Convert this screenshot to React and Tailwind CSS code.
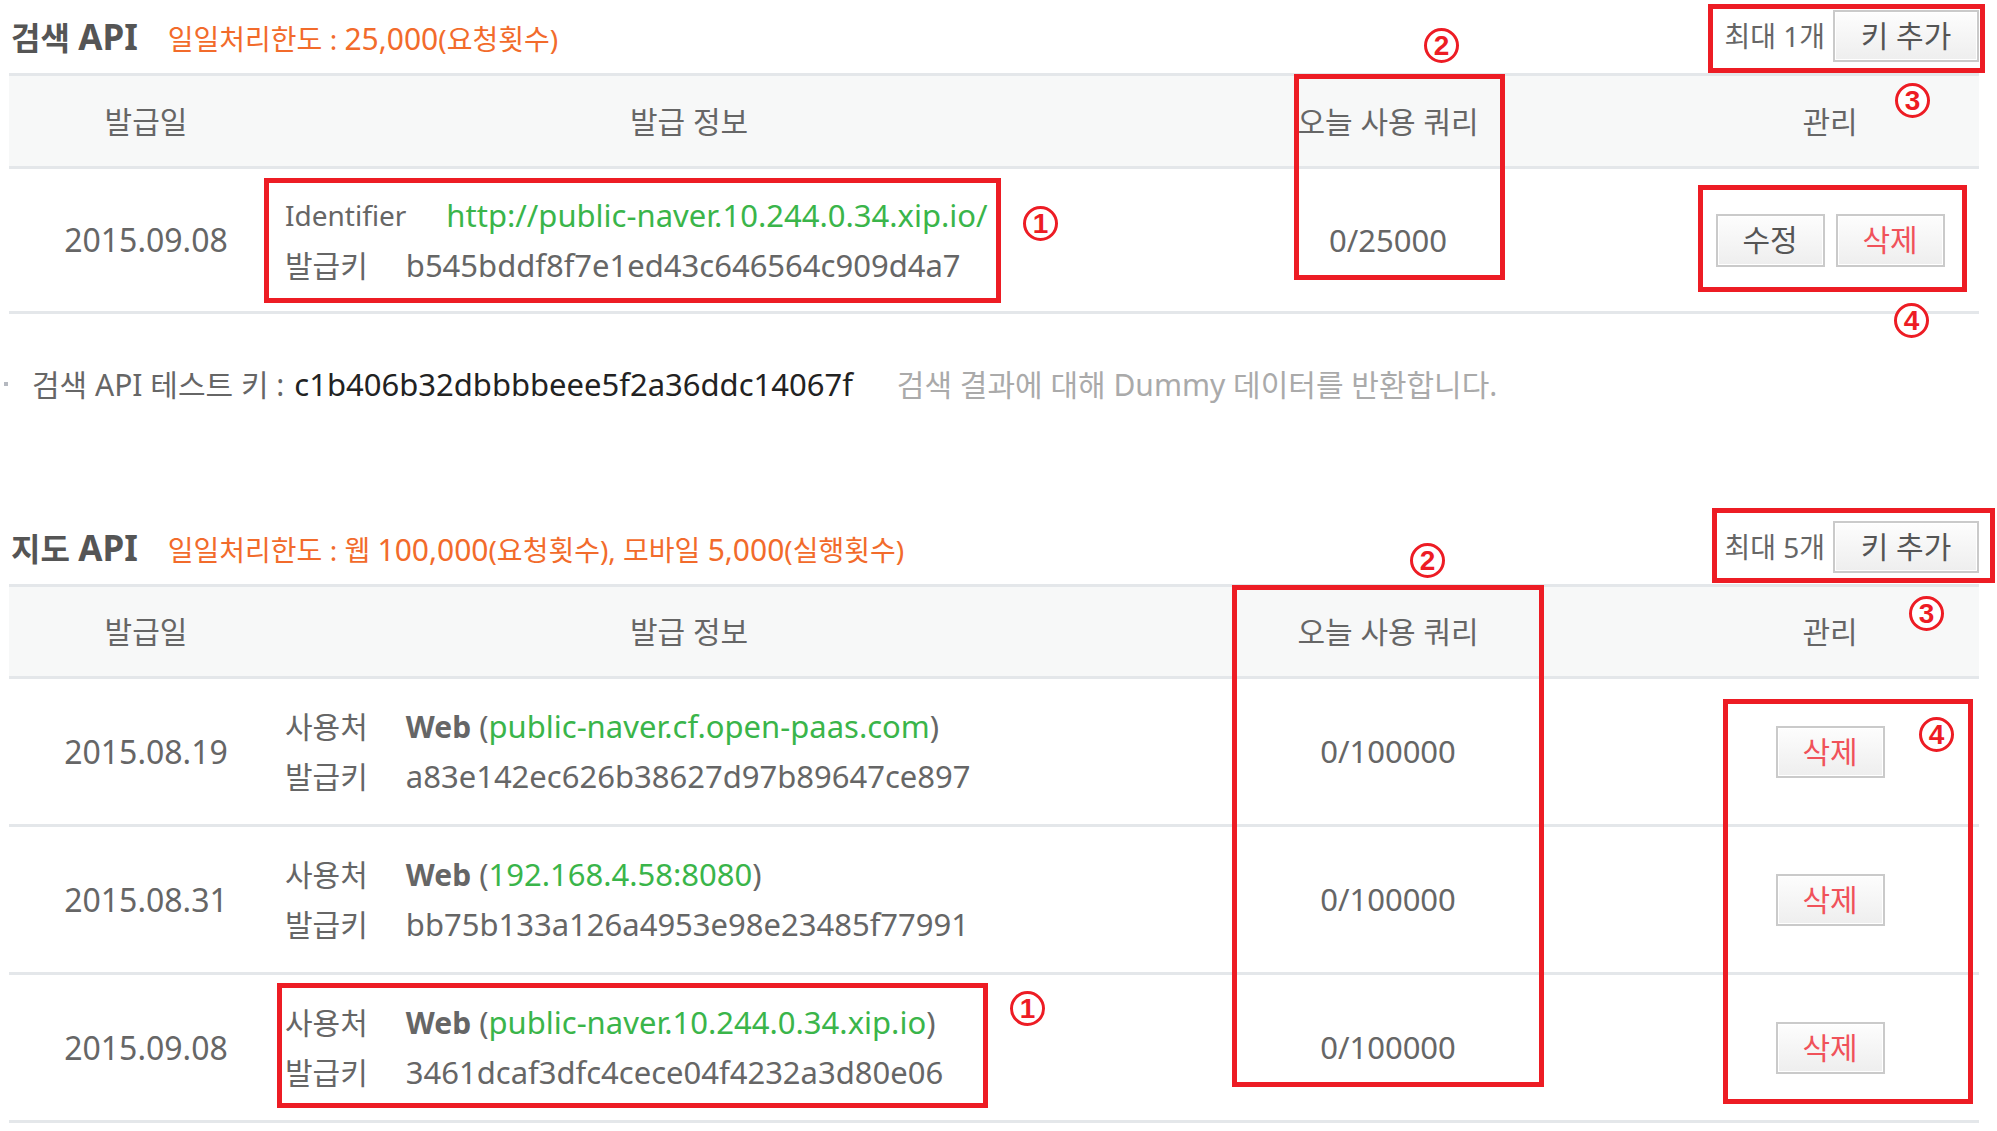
import React from "react";

const COLS = "grid grid-cols-[274px_812px_586px_298px]";

function Btn({ w = "w-[109px]", h = "h-[53px]", red = false, children }) {
  return (
    <div
      className={`${w} ${h} flex items-center justify-center border-2 border-[#cacaca] bg-linear-to-b from-[#fdfdfd] to-[#eeeeee] shadow-[inset_0_0_0_1px_#ffffff] text-[30px] leading-none ${
        red ? "text-[#f0525a]" : "text-[#555]"
      }`}
    >
      {children}
    </div>
  );
}

function Head({ title, limitNode, max }) {
  return (
    <div className="flex h-[73px] items-center justify-between">
      <div className="flex items-baseline pl-[2px]">
        <span className="font-bold text-[#555] text-[32px] leading-none">
          {title} <span className="text-[35px]">API</span>
        </span>
        <span className="ml-[30px] text-[#f26b2b] text-[28px] leading-none">{limitNode}</span>
      </div>
      <div className="flex items-center gap-[8px] -mt-[2px]">
        <span className="text-[28px] text-[#666] leading-none">
          최대 <span className="text-[28px]">{max}</span>개
        </span>
        <Btn w="w-[146px]" h="h-[52px]">
          키 추가
        </Btn>
      </div>
    </div>
  );
}

function TableHead({ h }) {
  return (
    <div className={`${COLS} ${h} items-center border-y-[3px] border-[#e4e7ea] bg-[#f7f8f8] text-center text-[30px] text-[#666]`}>
      <div>발급일</div>
      <div>발급 정보</div>
      <div>오늘 사용 쿼리</div>
      <div>관리</div>
    </div>
  );
}

function Row({ h, date, info, count, buttons }) {
  return (
    <div className={`${COLS} ${h} items-center border-b-[3px] border-[#e4e7ea] text-[#666]`}>
      <div className="text-center text-[32px]">{date}</div>
      <div className="flex flex-col pl-[2px]">{info}</div>
      <div className="text-center text-[31px]">{count}</div>
      <div className="flex justify-center gap-[11px]">{buttons}</div>
    </div>
  );
}

function Line({ label, children }) {
  return (
    <div className="flex items-center h-[50px] gap-[38px]">
      <span className="text-[30px]">{label}</span>
      <span className="text-[31px]">{children}</span>
    </div>
  );
}

function WebLine({ host }) {
  return (
    <Line label="사용처">
      <span className="font-bold text-[#666] text-[30px]">Web</span>{" "}
      (<span className="text-[#3ab54a]">{host}</span>)
    </Line>
  );
}

function Box({ l, t, w, h }) {
  return (
    <div
      className="absolute border-[5px] border-[#ed1c24]"
      style={{ left: l, top: t, width: w, height: h }}
    />
  );
}

function Num({ cx, cy, n }) {
  return (
    <div
      className="absolute w-[35px] h-[35px] rounded-full border-[3px] border-[#ed1c24] bg-white flex items-center justify-center text-[#ed1c24] font-bold text-[28px] leading-none font-['Liberation_Sans',sans-serif]"
      style={{ left: cx - 17, top: cy - 17 }}
    >
      {n}
    </div>
  );
}

export default function App() {
  return (
    <div className="relative w-[1997px] h-[1131px] bg-white overflow-hidden font-['Noto_Sans','Noto_Sans_CJK_KR',sans-serif] text-[#666]">
      <div className="pl-[9px] w-[1979px]">
        <Head
          title="검색"
          max="1"
          limitNode={
            <>
              일일처리한도 : <span className="text-[30px]">25,000</span>(요청횟수)
            </>
          }
        />
        <TableHead h="h-[96px]" />
        <Row
          h="h-[145px]"
          date="2015.09.08"
          count="0/25000"
          info={
            <>
              <div className="flex items-center h-[50px] gap-[40px]">
                <span className="text-[28px]">Identifier</span>
                <span className="text-[31px] text-[#3ab54a]">http://public-naver.10.244.0.34.xip.io/</span>
              </div>
              <Line label="발급키">b545bddf8f7e1ed43c646564c909d4a7</Line>
            </>
          }
          buttons={
            <>
              <Btn>수정</Btn>
              <Btn red>삭제</Btn>
            </>
          }
        />

        <div className="h-[197px] pt-[50px]">
          <div className="flex items-center h-[40px] -ml-[5px]">
            <span className="w-[4px] h-[4px] bg-[#b5b9c0] mr-[24px]" />
            <span className="text-[30px] text-[#666]">검색 API 테스트 키 :</span>
            <span className="ml-[10px] text-[31px] text-[#222]">c1b406b32dbbbbeee5f2a36ddc14067f</span>
            <span className="ml-[44px] text-[30px] text-[#aaa]">검색 결과에 대해 Dummy 데이터를 반환합니다.</span>
          </div>
        </div>

        <Head
          title="지도"
          max="5"
          limitNode={
            <>
              일일처리한도 : 웹 <span className="text-[30px]">100,000</span>(요청횟수), 모바일{" "}
              <span className="text-[30px]">5,000</span>(실행횟수)
            </>
          }
        />
        <TableHead h="h-[95px]" />
        <Row
          h="h-[148px]"
          date="2015.08.19"
          count="0/100000"
          info={
            <>
              <WebLine host="public-naver.cf.open-paas.com" />
              <Line label="발급키">a83e142ec626b38627d97b89647ce897</Line>
            </>
          }
          buttons={<Btn red h="h-[52px]">삭제</Btn>}
        />
        <Row
          h="h-[148px]"
          date="2015.08.31"
          count="0/100000"
          info={
            <>
              <WebLine host="192.168.4.58:8080" />
              <Line label="발급키">bb75b133a126a4953e98e23485f77991</Line>
            </>
          }
          buttons={<Btn red h="h-[52px]">삭제</Btn>}
        />
        <Row
          h="h-[148px]"
          date="2015.09.08"
          count="0/100000"
          info={
            <>
              <WebLine host="public-naver.10.244.0.34.xip.io" />
              <Line label="발급키">3461dcaf3dfc4cece04f4232a3d80e06</Line>
            </>
          }
          buttons={<Btn red h="h-[52px]">삭제</Btn>}
        />
      </div>

      {/* annotations */}
      <Box l={264} t={178} w={737} h={125} />
      <Box l={1294} t={74} w={211} h={206} />
      <Box l={1708} t={4} w={277} h={69} />
      <Box l={1698} t={185} w={269} h={107} />
      <Num cx={1040} cy={223} n="1" />
      <Num cx={1441} cy={45} n="2" />
      <Num cx={1912} cy={100} n="3" />
      <Num cx={1911} cy={320} n="4" />

      <Box l={277} t={983} w={711} h={125} />
      <Box l={1232} t={585} w={312} h={502} />
      <Box l={1712} t={508} w={283} h={75} />
      <Box l={1723} t={699} w={250} h={405} />
      <Num cx={1027} cy={1008} n="1" />
      <Num cx={1427} cy={560} n="2" />
      <Num cx={1926} cy={613} n="3" />
      <Num cx={1936} cy={734} n="4" />
    </div>
  );
}
